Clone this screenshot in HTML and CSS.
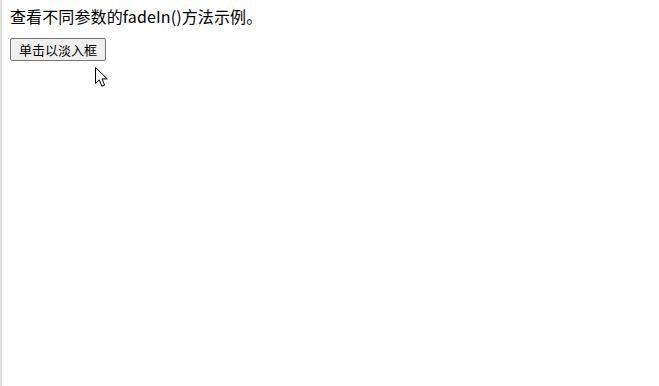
FILE: index.html
```html
<!DOCTYPE html>
<html lang="zh">
<head>
<meta charset="utf-8">
<title>fadeIn()</title>
<link rel="stylesheet" href="styles.css">
</head>
<body>
<div class="page">
  <p class="intro">查看不同参数的fadeIn()方法示例。</p>
  <button class="btn" type="button">单击以淡入框</button>
</div>
<svg class="cursor" width="14" height="22" viewBox="0 0 14 22" aria-hidden="true">
  <path d="M0.5 0.5 L0.5 16.5 L4.3 12.9 L6.9 19.2 L9.6 18.1 L7 11.9 L12.3 11.9 Z" fill="#fff" stroke="#000" stroke-width="1" stroke-linejoin="miter"/>
</svg>
</body>
</html>
```

FILE: styles.css
```css
html, body {
  margin: 0;
  padding: 0;
  height: 100%;
  background: #fefefe;
}
body {
  font-family: "Noto Sans CJK SC", "Noto Sans", sans-serif;
  color: #000;
}
.page {
  height: 100%;
  box-sizing: border-box;
  border-left: 2px solid #dedede;
  padding: 5px 8px 0 8px;
  display: flex;
  flex-direction: column;
  align-items: flex-start;
}
.intro {
  margin: 0 0 11px 0;
  font-size: 16px;
  line-height: 22px;
  letter-spacing: 0.12px;
}
.btn {
  font-family: "Noto Sans CJK SC", sans-serif;
  font-size: 13px;
  line-height: 17px;
  height: 23px;
  padding: 2px 8px;
  border: 1px solid #767676;
  border-radius: 2px;
  background: #efefef;
  color: #000;
  box-sizing: border-box;
}
.cursor {
  position: absolute;
  left: 95px;
  top: 67px;
}
```
